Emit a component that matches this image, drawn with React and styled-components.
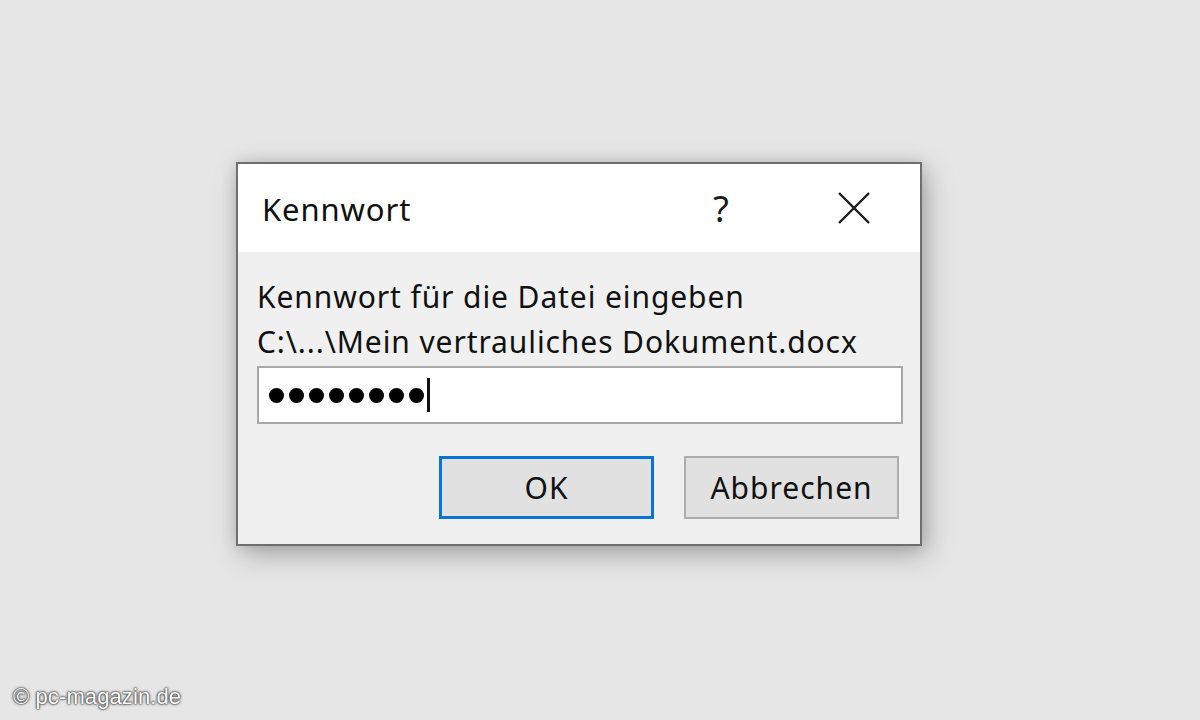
import styled, { createGlobalStyle } from "styled-components";

const GlobalStyle = createGlobalStyle`
  html, body {
    margin: 0;
    padding: 0;
    background: #e6e6e6;
  }
  body {
    font-family: "Noto Sans", "Open Sans", sans-serif;
  }
`;

const Page = styled.div`
  position: relative;
  width: 1200px;
  height: 720px;
  box-sizing: border-box;
  padding: 162px 0 0 236px;
  background: #e6e6e6;
  overflow: hidden;
`;

const Dialog = styled.div`
  width: 686px;
  height: 384px;
  box-sizing: border-box;
  border: 2px solid #6e6e6e;
  background: #f0f0f0;
  display: flex;
  flex-direction: column;
  box-shadow: 5px 9px 26px rgba(0, 0, 0, 0.26), 0 0 14px rgba(0, 0, 0, 0.12);
`;

const TitleBar = styled.div`
  height: 88px;
  background: #ffffff;
  display: flex;
  align-items: center;
  padding: 0 0 0 24px;
`;

const Title = styled.div`
  flex: 1;
  font-size: 31px;
  letter-spacing: 0.9px;
  color: #111;
  padding-top: 2px;
`;

const TitleButton = styled.div`
  width: ${({ $w }) => $w}px;
  height: 40px;
  display: flex;
  align-items: center;
  justify-content: center;
  color: #1a1a1a;
  font-size: 36px;
  margin-right: ${({ $mr }) => $mr || 0}px;
`;

const Body = styled.div`
  flex: 1;
  padding: 22px 17px 0 19px;
  display: flex;
  flex-direction: column;
`;

const Line = styled.div`
  font-size: 30px;
  letter-spacing: 0.9px;
  line-height: 45px;
  color: #111;
  white-space: nowrap;
`;

const Input = styled.div`
  margin-top: 2px;
  height: 58px;
  box-sizing: border-box;
  border: 2px solid #a8a8a8;
  background: #ffffff;
  display: flex;
  align-items: center;
  padding-left: 10px;
`;

const Dot = styled.span`
  width: 15px;
  height: 15px;
  border-radius: 50%;
  background: #000;
  margin-right: 5px;
`;

const Caret = styled.span`
  width: 3px;
  height: 34px;
  background: #111;
  margin-left: -2px;
`;

const Buttons = styled.div`
  margin-top: 32px;
  display: flex;
  justify-content: flex-end;
  gap: 30px;
  padding-right: 4px;
`;

const Button = styled.div`
  width: 215px;
  height: 63px;
  box-sizing: border-box;
  border: ${({ $primary }) => ($primary ? "3px solid #0a74d6" : "2px solid #adadad")};
  background: #e1e1e1;
  display: flex;
  align-items: center;
  justify-content: center;
  font-size: 30px;
  letter-spacing: 1px;
  color: #111;
`;

const Watermark = styled.div`
  position: absolute;
  left: 13px;
  bottom: 10px;
  font-family: "Liberation Sans", Arial, sans-serif;
  font-size: 22px;
  letter-spacing: 0.1px;
  color: #ffffff;
  text-shadow: 0 0 3px #3a3a3a, 0 0 2px #3a3a3a, 0 0 1px #222;
`;

export default function App() {
  return (
    <>
      <GlobalStyle />
      <Page>
        <Dialog>
          <TitleBar>
            <Title>Kennwort</Title>
            <TitleButton $w={40} $mr={93}>?</TitleButton>
            <TitleButton $w={40} $mr={46}>
              <svg width="34" height="34" viewBox="0 0 34 34">
                <path d="M2 2 L32 32 M32 2 L2 32" stroke="#1a1a1a" strokeWidth="2.4" fill="none" />
              </svg>
            </TitleButton>
          </TitleBar>
          <Body>
            <Line>Kennwort für die Datei eingeben</Line>
            <Line>C:\...\Mein vertrauliches Dokument.docx</Line>
            <Input>
              {Array.from({ length: 8 }).map((_, i) => (
                <Dot key={i} />
              ))}
              <Caret />
            </Input>
            <Buttons>
              <Button $primary>OK</Button>
              <Button>Abbrechen</Button>
            </Buttons>
          </Body>
        </Dialog>
        <Watermark>© pc-magazin.de</Watermark>
      </Page>
    </>
  );
}
